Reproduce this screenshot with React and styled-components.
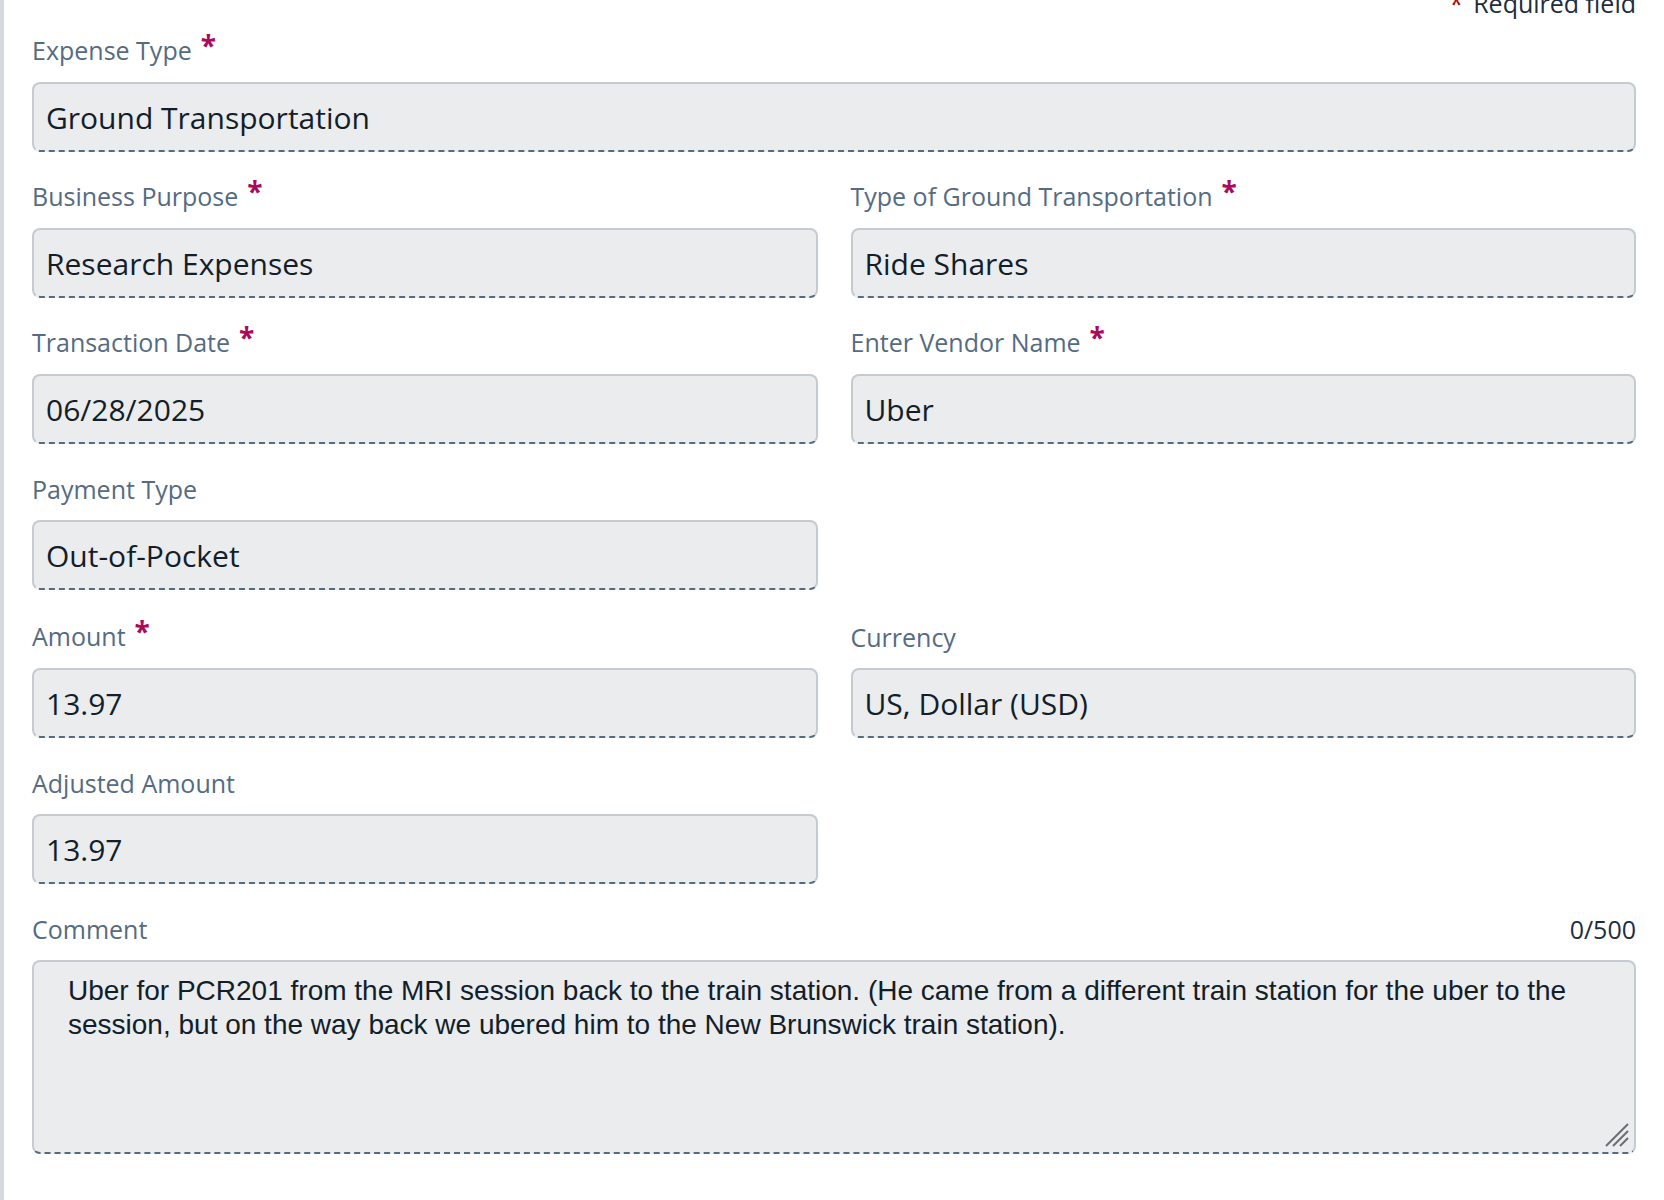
import styled, { createGlobalStyle } from 'styled-components';

const Global = createGlobalStyle`
  body { margin: 0; background: #fff; font-family: "Open Sans", "Noto Sans", sans-serif; }
`;

const Page = styled.div`
  width: 1664px;
  height: 1200px;
  overflow: hidden;
  box-sizing: border-box;
  border-left: 4px solid #d5d8dc;
  padding: 0 28px 0 28px;
`;

const Required = styled.div`
  text-align: right;
  font-size: 25px;
  line-height: 30px;
  color: #1d2d3e;
  margin-top: -12px;
  height: 42px;
  span { color: #aa0808; margin-right: 10px; }
`;

const Grid = styled.div`
  display: grid;
  grid-template-columns: 1fr 1fr;
  column-gap: 33px;
`;

const Field = styled.div`
  grid-column: ${(p) => (p.$full ? '1 / -1' : p.$col ? `${p.$col}` : 'auto')};
  margin-bottom: ${(p) => p.$mb || 24}px;
`;

const LabelRow = styled.div`
  display: flex;
  justify-content: space-between;
  align-items: flex-end;
  height: 38px;
  margin-bottom: 14px;
`;

const Label = styled.div`
  font-size: 25px;
  color: #556b82;
  b { color: #aa0a5b; font-weight: 700; margin-left: 9px; font-size: 28px; position: relative; top: -4px; }
`;

const Counter = styled.div`
  font-size: 25px;
  color: #1d2d3e;
`;

const Input = styled.div`
  height: 70px;
  box-sizing: border-box;
  background: #eaecee;
  border: 2px solid #c5cbd1;
  border-bottom: 2px dashed #556b82;
  border-radius: 8px;
  display: flex;
  align-items: center;
  padding: 0 12px;
  font-size: 30px;
  color: #131e29;
`;

const TextArea = styled.div`
  position: relative;
  height: 194px;
  box-sizing: border-box;
  background: #eaecee;
  border: 2px solid #c5cbd1;
  border-bottom: 2px dashed #556b82;
  border-radius: 8px;
  padding: 12px 30px 0 34px;
  font-family: "Liberation Sans", Arial, sans-serif;
  font-size: 28px;
  line-height: 34px;
  color: #131e29;
`;

const Grip = styled.svg`
  position: absolute;
  right: 4px;
  bottom: 4px;
`;

const Rule = styled.div`
  margin: 30px 0 0 79px;
  height: 2px;
  background: #747474;
`;

function F({ label, req, value, full, col, mb }) {
  return (
    <Field $full={full} $col={col} $mb={mb}>
      <LabelRow>
        <Label>{label}{req && <b>*</b>}</Label>
      </LabelRow>
      <Input>{value}</Input>
    </Field>
  );
}

export default function App() {
  return (
    <Page>
      <Global />
      <Required><span>*</span>Required field</Required>
      <Grid>
        <F full label="Expense Type" req value="Ground Transportation" />
        <F label="Business Purpose" req value="Research Expenses" />
        <F label="Type of Ground Transportation" req value="Ride Shares" />
        <F label="Transaction Date" req value="06/28/2025" />
        <F label="Enter Vendor Name" req value="Uber" />
        <F label="Payment Type" value="Out-of-Pocket" mb={26} />
        <F col={1} label="Amount" req value="13.97" />
        <F label="Currency" value="US, Dollar (USD)" />
        <F col={1} label="Adjusted Amount" value="13.97" />
        <Field $full $mb={0}>
          <LabelRow>
            <Label>Comment</Label>
            <Counter>0/500</Counter>
          </LabelRow>
          <TextArea>
            Uber for PCR201 from the MRI session back to the train station. (He came from a different train station for the uber to the session, but on the way back we ubered him to the New Brunswick train station).
            <Grip width="26" height="26" viewBox="0 0 26 26">
              <g stroke="#6a6d70" strokeWidth="2">
                <line x1="2" y1="24" x2="24" y2="2" />
                <line x1="9" y1="24" x2="24" y2="9" />
                <line x1="16" y1="24" x2="24" y2="16" />
              </g>
            </Grip>
          </TextArea>
        </Field>
      </Grid>
      <Rule />
    </Page>
  );
}
